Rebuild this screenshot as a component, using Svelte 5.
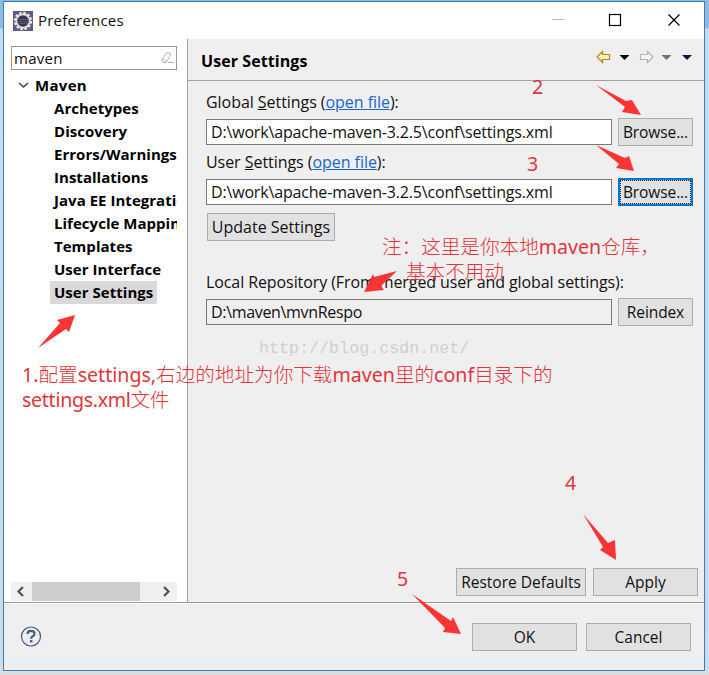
<script lang="ts">
  const pages = [
    'Archetypes',
    'Discovery',
    'Errors/Warnings',
    'Installations',
    'Java EE Integration',
    'Lifecycle Mappings',
    'Templates',
    'User Interface',
    'User Settings'
  ];

  const arrows = [
    '596,85 626,101 632,100 641,115 622,112 625,107',
    '596,145 625,158 629,156 634,171 616,168 619,164',
    '397,271 374,277 373,274 364,292 384,290 381,286',
    '38,348 60,323 57,320 75,315 69,332 66,329',
    '583,514 608,543 615,540 616,560 600,550 603,547',
    '412,594 451,621 453,617 461,634 443,632 445,628'
  ];

  let selected = $state('User Settings');
  let filter = $state('maven');
  let settingsPath = $state('D:\\work\\apache-maven-3.2.5\\conf\\settings.xml');
</script>

<div class="desktop">
  <div class="window">
    <header class="titlebar">
      <svg class="logo" width="20" height="20" viewBox="0 0 20 20">
        <rect width="20" height="20" fill="#625a86" />
        <circle cx="10" cy="10" r="7.7" fill="none" stroke="#e6e2dd" stroke-width="3" stroke-dasharray="2.6 1.43" />
        <circle cx="10" cy="10" r="6.6" fill="#39344c" stroke="#e6e2dd" stroke-width="1.6" />
        <path d="M4.5 8.5h11M4.2 10.5h11.6M5 12.5h10" stroke="#5d5778" />
      </svg>
      <span class="title">Preferences</span>
      <svg class="controls" width="130" height="14" viewBox="0 0 130 14">
        <path d="M0 6.5h12" stroke="#bcbcbc" />
        <rect x="57.5" y="1.5" width="11" height="11" fill="none" stroke="#000" stroke-width="1.2" />
        <path d="M116.5 1.5l11 11M127.5 1.5l-11 11" stroke="#000" stroke-width="1.2" />
      </svg>
    </header>

    <div class="body">
      <aside>
        <div class="search">
          <input bind:value={filter} aria-label="Filter" />
          <svg width="14" height="14" viewBox="0 0 14 14" fill="none" stroke="#b4b4b4">
            <path d="M1.5 9.5L6 2.5Q7 1.5 10 2L11 3.5L6 11.5H3ZM1.5 9.5Q5 7.5 6 11.5M8 11.5h6" />
          </svg>
        </div>
        <div class="tree">
          <div class="root">
            <svg width="11" height="8" viewBox="0 0 11 8">
              <path d="M1 2l4.5 4L10 2" fill="none" stroke="#444" stroke-width="1.6" />
            </svg>
            <span>Maven</span>
          </div>
          {#each pages as page}
            <button class="page" class:selected={selected === page} onclick={() => (selected = page)}>
              {page}
            </button>
          {/each}
        </div>
        <div class="scrollbar">
          <svg width="21" height="19" viewBox="0 0 21 19"><path d="M12 5L7.5 9.5 12 14" /></svg>
          <div class="thumb"></div>
          <svg width="21" height="19" viewBox="0 0 21 19"><path d="M8 5l4.5 4.5L8 14" /></svg>
        </div>
      </aside>

      <main>
        <div class="heading">
          <h1>User Settings</h1>
          <svg width="98" height="16" viewBox="0 0 98 16">
            <path d="M2 8l5.5-5.5v3h7v5h-7v3z" fill="#fff3b0" stroke="#b8862b" stroke-width="1.2" />
            <path d="M24.5 6h10l-5 5z" fill="#000" />
            <path d="M58 8l-5.5-5.5v3h-7v5h7v3z" fill="#f5f5f5" stroke="#b5b5b5" stroke-width="1.2" />
            <path d="M66.5 6h10l-5 5z" fill="#707070" />
            <path d="M87 6h10l-5 5z" fill="#15153a" />
          </svg>
        </div>

        <div class="form">
          <div class="label">Global <u>S</u>ettings (<a href="#global">open file</a>):</div>
          <div class="row">
            <input bind:value={settingsPath} aria-label="Global settings" />
            <button class="btn">Browse...</button>
          </div>
          <div class="label">User <u>S</u>ettings (<a href="#user">open file</a>):</div>
          <div class="row">
            <input bind:value={settingsPath} aria-label="User settings" />
            <button class="btn focused">Browse...</button>
          </div>
          <button class="btn update">Update Settings</button>
          <div class="label repo">Local Repository (From merged user and global settings):</div>
          <div class="row">
            <input class="readonly" value="D:\maven\mvnRespo" readonly aria-label="Local repository" />
            <button class="btn">Reindex</button>
          </div>
        </div>

        <div class="actions">
          <button class="btn restore">Restore Defaults</button>
          <button class="btn wide">Apply</button>
        </div>
      </main>
    </div>

    <footer>
      <svg width="22" height="22" viewBox="0 0 22 22">
        <circle cx="11" cy="10.5" r="9.5" fill="#e9eef6" stroke="#50586e" stroke-width="1.2" />
        <path d="M7.6 8.1Q7.6 4.8 11 4.8Q14.5 4.8 14.5 7.7Q14.5 9.3 12.6 10.4Q11.2 11.2 11.2 12.7" fill="none" stroke="#50586e" stroke-width="2.2" />
        <rect x="10" y="14" width="2.4" height="2.4" fill="#50586e" />
      </svg>
      <div class="footer-buttons">
        <button class="btn wide">OK</button>
        <button class="btn wide">Cancel</button>
      </div>
    </footer>
  </div>

  <!-- tutorial notes drawn over the dialog -->
  <div class="notes">
    <svg width="709" height="675" viewBox="0 0 709 675">
      {#each arrows as points}
        <polygon {points} fill="#fb3434" />
      {/each}
    </svg>
    <b class="note n2">2</b>
    <b class="note n3">3</b>
    <b class="note n4">4</b>
    <b class="note n5">5</b>
    <span class="note repo-note">注：这里是你本地<b>maven</b>仓库，</span>
    <span class="note repo-note-2">基本不用动</span>
    <span class="note step-1"><b>1.</b>配置<b>settings,</b>右边的地址为你下载<b>maven</b>里的<b>conf</b>目录下的</span>
    <span class="note step-1b"><b>settings.xml</b>文件</span>
    <span class="watermark">http://blog.csdn.net/</span>
  </div>
</div>

<style>
  :global(body) {
    margin: 0;
    overflow: hidden;
  }

  .desktop {
    position: relative;
    box-sizing: border-box;
    width: 709px;
    height: 675px;
    padding: 1px 4px 4px 3px;
    background: linear-gradient(#8cbce4 0, #8cbce4 28px, #c5dcef 29px, #cbdcec 660px, #d9dde1 672px);
    font-family: 'Open Sans', 'Noto Sans', 'Noto Sans CJK SC', sans-serif;
    font-size: 15px;
    color: #111;
    overflow: hidden;
  }

  .window {
    display: flex;
    flex-direction: column;
    box-sizing: border-box;
    width: 702px;
    height: 670px;
    border: 1px solid #3e7fb3;
    background: #efefef;
  }

  .titlebar {
    display: flex;
    align-items: center;
    box-sizing: border-box;
    height: 37px;
    padding: 0 22px 0 9px;
    background: #fff;
  }

  .controls {
    margin-top: -1px;
  }

  .title {
    flex: 1;
    margin: -2px 0 0 5px;
    letter-spacing: 0.2px;
  }

  .body {
    display: flex;
    height: 563px;
    border-bottom: 1px solid #999;
  }

  aside {
    display: flex;
    flex-direction: column;
    box-sizing: border-box;
    width: 184px;
    padding: 7px 10px 1px 7px;
    border-right: 1px solid #a0a0a0;
    background: #fff;
  }

  .search {
    display: flex;
    align-items: center;
    box-sizing: border-box;
    height: 24px;
    padding-right: 2px;
    border: 1px solid #999;
  }

  input {
    box-sizing: border-box;
    min-width: 0;
    flex: 1;
    margin: 0;
    padding: 0 4px;
    border: 0;
    background: #fff;
    color: #111;
    font: inherit;
    outline: none;
  }

  .search input {
    padding: 0 2px;
    height: 21px;
    letter-spacing: 0.3px;
  }

  .tree {
    display: flex;
    flex-direction: column;
    align-items: flex-start;
    flex: 1;
    padding-top: 3px;
    overflow: hidden;
    color: #000;
    font-weight: 700;
  }

  .root {
    display: flex;
    align-items: center;
    gap: 6px;
    height: 23px;
    margin-bottom: 1px;
    padding-left: 7px;
    letter-spacing: 0.3px;
  }

  .page {
    flex: none;
    height: 23px;
    margin-left: 39px;
    padding: 0 4px;
    border: 0;
    background: none;
    color: inherit;
    font: inherit;
    line-height: 23px;
    letter-spacing: 0.03px;
    white-space: nowrap;
  }

  .page.selected {
    background: #d9d9d9;
  }

  .scrollbar {
    display: flex;
    height: 19px;
    background: #f0f0f0;
  }

  .scrollbar path {
    fill: none;
    stroke: #505050;
    stroke-width: 2.2;
  }

  .thumb {
    width: 108px;
    margin-right: auto;
    background: #cdcdcd;
  }

  main {
    display: flex;
    flex-direction: column;
    flex: 1;
  }

  .heading {
    display: flex;
    align-items: center;
    justify-content: space-between;
    height: 41px;
    padding: 0 11px 0 13px;
    border-bottom: 1px solid #a0a0a0;
    color: #000;
  }

  .heading svg {
    margin-top: -5px;
  }

  h1 {
    margin: 3px 0 0;
    font-size: 16px;
    font-weight: 700;
    letter-spacing: 0.08px;
  }

  .form {
    padding: 9px 11px 0 18px;
  }

  .label {
    height: 24px;
    line-height: 24px;
    margin-bottom: 4px;
    font-size: 16px;
    letter-spacing: -0.05px;
    white-space: nowrap;
  }

  a {
    color: #1a66cc;
  }

  .row {
    display: flex;
    align-items: center;
    gap: 6px;
    height: 28px;
    margin-bottom: 4px;
  }

  .row input {
    height: 26px;
    border: 1px solid #7a7a7a;
    font-size: 16px;
    letter-spacing: -0.17px;
  }

  .row input.readonly {
    background: #efefef;
    letter-spacing: -0.33px;
  }

  .btn {
    box-sizing: border-box;
    height: 28px;
    padding: 0;
    border: 1px solid #adadad;
    background: #e1e1e1;
    color: #111;
    font: inherit;
    font-size: 15.5px;
    line-height: 26px;
    white-space: nowrap;
  }

  .row .btn {
    width: 75px;
    letter-spacing: -0.1px;
  }

  .btn.focused {
    border: 2px solid #0078d7;
    outline: 1px dotted #222;
    outline-offset: -3px;
    line-height: 24px;
  }

  .update {
    display: block;
    width: 128px;
    margin: 7px 0 0 1px;
    font-size: 16px;
  }

  .label.repo {
    margin-top: 29px;
    letter-spacing: -0.09px;
  }

  .actions {
    display: flex;
    justify-content: flex-end;
    gap: 7px;
    margin-top: auto;
    padding: 0 6px 6px 0;
  }

  .restore {
    width: 130px;
  }

  .wide {
    width: 105px;
  }

  footer {
    display: flex;
    align-items: center;
    justify-content: space-between;
    flex: 1;
    padding: 0 13px 0 16px;
    border-top: 1px solid #fff;
    background: linear-gradient(#efefef 52px, #e7eff6 56px, #e7eff6 60px, #faeadf 63px, #e9f0f6 66px);
  }

  .footer-buttons {
    display: flex;
    gap: 9px;
  }

  .notes {
    position: absolute;
    inset: 0;
    pointer-events: none;
  }

  .notes svg {
    display: block;
  }

  .note {
    position: absolute;
    color: #e0343c;
    font-family: 'Noto Sans CJK SC', sans-serif;
    font-size: 19.6px;
    font-weight: 300;
    line-height: 24px;
    white-space: nowrap;
  }

  b,
  b.note {
    font-family: 'Noto Sans', sans-serif;
    font-weight: 400;
  }

  .n2 { left: 532px; top: 75px; }
  .n3 { left: 527px; top: 152px; }
  .n4 { left: 565px; top: 471px; }
  .n5 { left: 397px; top: 567px; }
  .repo-note { left: 382px; top: 234px; }
  .repo-note-2 { left: 406px; top: 259px; }
  .step-1 { left: 22px; top: 362px; }
  .step-1b { left: 22px; top: 387px; letter-spacing: -0.3px; }

  .watermark {
    position: absolute;
    left: 259px;
    top: 337px;
    color: #cfcfcf;
    font-family: 'Liberation Mono', monospace;
    font-size: 16.7px;
    line-height: 24px;
  }
</style>
